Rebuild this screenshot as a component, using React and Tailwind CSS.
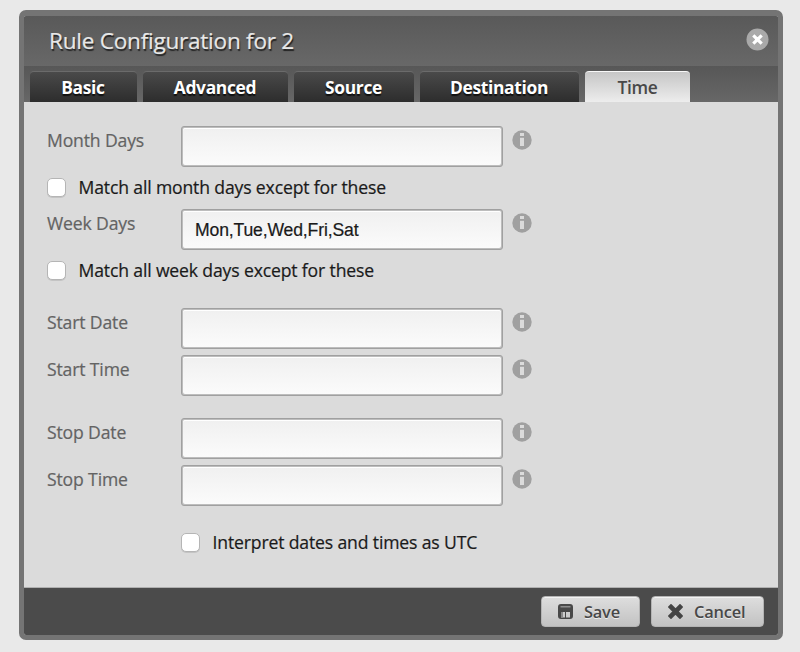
import React from "react";

const tabs = [
  { label: "Basic", width: "w-[107px]" },
  { label: "Advanced", width: "w-[145px]" },
  { label: "Source", width: "w-[120px]" },
  { label: "Destination", width: "w-[159px]" },
];

function InfoIcon() {
  return (
    <svg className="ml-[9px] mt-[4px] size-5 shrink-0" viewBox="0 0 20 20">
      <circle cx="10" cy="10" r="9.7" fill="#a0a0a0" />
      <rect x="8" y="3" width="4" height="3" fill="#dbdbdb" />
      <rect x="8" y="7.8" width="4" height="8.2" fill="#dbdbdb" />
    </svg>
  );
}

function Field({ label, value = "", gap = "" }) {
  return (
    <div className={`flex h-[41px] items-start ${gap}`}>
      <label className="w-[134px] shrink-0 whitespace-nowrap pt-[2px] leading-6 text-[#636363]">{label}</label>
      <div className="h-[41px] w-[322px] rounded-[3px] border border-[#a0a0a0] bg-[#bdbdbd] p-px">
        <input
          readOnly
          value={value}
          className="block h-full w-full rounded-[2px] bg-linear-to-b from-[#f0f0f0] to-[#fbfbfb] pl-[12px] pt-[2px] font-['Liberation_Sans',sans-serif] text-[17.6px] tracking-[-0.15px] text-[#1a1a1a] shadow-[inset_0_1px_0_#fff] outline-none [-webkit-text-stroke:0.2px]"
        />
      </div>
      <InfoIcon />
    </div>
  );
}

function Check({ label, className = "" }) {
  return (
    <label className={`flex items-center text-[#1a1a1a] ${className}`}>
      <span className="size-[19px] rounded-[5px] border border-[#b5b5b5] bg-white shadow-[0_1px_0_#c4c4c4]" />
      <span className="ml-[12.5px] whitespace-nowrap">{label}</span>
    </label>
  );
}

function SaveIcon() {
  return (
    <svg className="h-[15px] w-[15px]" viewBox="0 0 15 15">
      <path fillRule="evenodd" fill="#484848" d="M3 0h9a3 3 0 0 1 3 3v9a3 3 0 0 1-3 3H3a3 3 0 0 1-3-3V3a3 3 0 0 1 3-3ZM3 8v5.5h4v-5.500ZM8 8v5.500h4v-5.500Z" />
      <rect x="2.5" y="2" width="10" height="1.5" fill="#8c8c8c" />
      <rect x="3" y="8" width="2" height="5.5" fill="#8c8c8c" />
    </svg>
  );
}

function CancelIcon() {
  return (
    <svg className="h-[15px] w-[15px]" viewBox="0 0 15 15">
      <path d="M3 3l9 9M12 3L3 12" stroke="#444" strokeWidth="4.6" strokeLinecap="square" />
    </svg>
  );
}

function Button({ icon, label, className }) {
  return (
    <button
      className={`flex h-[31px] items-center gap-[11px] rounded-[4px] border border-[#b4b4b4] bg-linear-to-b from-[#dedede] to-[#c2c2c2] pl-[16px] text-[16.4px] font-semibold tracking-[-0.2px] text-[#484848] shadow-[inset_0_1px_0_#f2f2f2] [text-shadow:0_1px_0_#eee] ${className}`}
    >
      {icon}
      <span className="leading-5">{label}</span>
    </button>
  );
}

export default function App() {
  return (
    <div className="h-[652px] w-[800px] overflow-hidden bg-[#e9e9e9] pl-[19px] pt-[10px] font-['Open_Sans',sans-serif] text-[17.6px] tracking-[-0.15px] [-webkit-text-stroke:0.2px]">
      <div className="flex h-[630px] w-[764px] flex-col overflow-hidden rounded-[7px] border-[5px] border-t-[6px] border-[#747474]">
        <header className="flex h-[50px] shrink-0 items-center justify-between bg-linear-to-b from-[#595959] to-[#686868] pl-[25px] pr-[9px]">
          <h1 className="whitespace-nowrap text-[22.6px] leading-[30px] tracking-[-0.26px] text-[#e8e8e8] [text-shadow:1px_2px_1px_#222]">Rule Configuration for 2</h1>
          <button className="mb-[3px]">
            <svg className="size-[23px]" viewBox="0 0 23 23">
              <circle cx="11.5" cy="11.5" r="11" fill="#a9a9a9" />
              <path d="M7.3 7.3l8.4 8.4M15.7 7.3l-8.4 8.4" stroke="#fff" strokeWidth="3.2" />
            </svg>
          </button>
        </header>
        <nav className="flex h-[36px] shrink-0 items-end gap-[6px] bg-linear-to-b from-[#575757] to-[#676767] pl-[6px] text-[17.4px] leading-[31px] tracking-[-0.32px] [-webkit-text-stroke:0px]">
          {tabs.map((t) => (
            <div
              key={t.label}
              className={`h-[31px] rounded-t-[4px] border-t border-[#6b6b6b] bg-linear-to-b from-[#4a4a4a] to-[#2d2d2d] pr-px text-center font-bold text-white [text-shadow:0_2px_1px_#111] ${t.width}`}
            >
              {t.label}
            </div>
          ))}
          <div className="h-[31px] w-[105px] rounded-t-[4px] border-t border-[#f8f8f8] bg-linear-to-b from-[#c6c6c6] to-[#ededed] text-center font-semibold text-[#484848]">
            Time
          </div>
        </nav>
        <main className="h-[486px] shrink-0 border-b border-[#b0b0b0] bg-[#dbdbdb] pl-[23px] pt-[24px]">
          <Field label="Month Days" />
          <Check label="Match all month days except for these" className="mb-[2px] h-[40px]" />
          <Field label="Week Days" value="Mon,Tue,Wed,Fri,Sat" />
          <Check label="Match all week days except for these" className="h-[40px]" />
          <Field label="Start Date" gap="mt-[18px]" />
          <Field label="Start Time" gap="mt-[6px]" />
          <Field label="Stop Date" gap="mt-[22px]" />
          <Field label="Stop Time" gap="mt-[6px]" />
          <Check label="Interpret dates and times as UTC" className="ml-[134px] mt-[16px] h-[40px]" />
        </main>
        <footer className="flex flex-1 items-center justify-end gap-[11px] bg-[#4b4b4b] pr-[14px] [-webkit-text-stroke:0px]">
          <Button label="Save" icon={<SaveIcon />} className="w-[99px]" />
          <Button label="Cancel" icon={<CancelIcon />} className="w-[113px]" />
        </footer>
      </div>
    </div>
  );
}
